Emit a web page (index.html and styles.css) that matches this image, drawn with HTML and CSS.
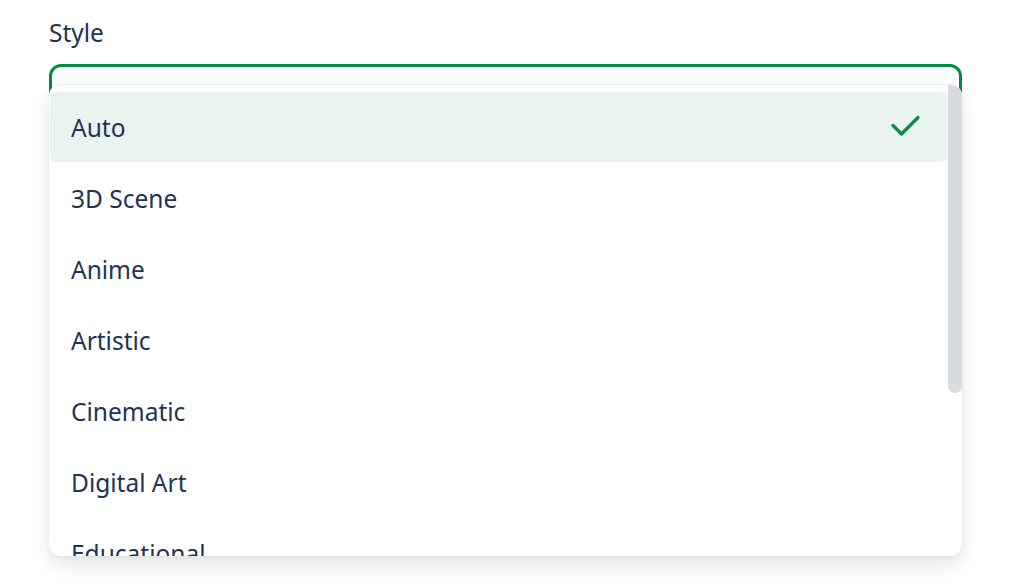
FILE: index.html
```html
<!DOCTYPE html>
<html lang="en">
<head>
<meta charset="utf-8">
<title>Style select</title>
<link rel="stylesheet" href="styles.css">
</head>
<body>
<div class="form">
  <label class="label">Style</label>
  <div class="select-wrap">
    <div class="select"></div>
    <div class="menu">
      <ul class="options">
        <li class="option selected"><span>Auto</span>
          <svg class="check" width="32" height="26" viewBox="0 0 32 26"><path d="M3 10.5 L11.5 19 L28 2.5" fill="none" stroke="#0b8a4b" stroke-width="3.2" stroke-linecap="round" stroke-linejoin="round"/></svg>
        </li>
        <li class="option"><span>3D Scene</span></li>
        <li class="option"><span>Anime</span></li>
        <li class="option"><span>Artistic</span></li>
        <li class="option"><span>Cinematic</span></li>
        <li class="option"><span>Digital Art</span></li>
        <li class="option"><span>Educational</span></li>
      </ul>
      <div class="scrollbar"></div>
    </div>
  </div>
</div>
</body>
</html>
```

FILE: styles.css
```css
html, body {
  margin: 0;
  padding: 0;
  background: #ffffff;
}
body {
  font-family: "Noto Sans", "Open Sans", sans-serif;
  color: #1f3355;
  overflow: hidden;
  height: 582px;
}
.form {
  padding: 16px 0 0 49px;
  width: 913px;
}
.label {
  display: block;
  font-size: 24.5px;
  line-height: 34px;
  color: #1f3355;
}
.select-wrap {
  position: relative;
  margin-top: 14px;
}
.select {
  height: 56px;
  border: 3px solid #078a45;
  border-radius: 12px;
  box-sizing: border-box;
}
.menu {
  position: absolute;
  top: 20px;
  left: 0;
  width: 913px;
  height: 472px;
  background: #ffffff;
  border-top: 1px solid #eceef0;
  border-radius: 12px;
  box-sizing: border-box;
  overflow: hidden;
  box-shadow: 0 10px 22px rgba(0, 0, 0, 0.09), 0 2px 6px rgba(0, 0, 0, 0.05);
}
.options {
  list-style: none;
  margin: 0;
  padding: 7px 15px 0 1px;
}
.option {
  display: flex;
  align-items: center;
  justify-content: space-between;
  height: 71px;
  padding: 0 25px 0 21px;
  font-size: 24.5px;
  border-radius: 6px;
}
.option.selected {
  background: #eaf4ef;
  height: 70px;
  margin-bottom: 1px;
}
.check {
  display: block;
  margin-top: 2px;
}
.scrollbar {
  position: absolute;
  top: 0;
  right: 0;
  width: 14px;
  height: 308px;
  background: #d8dbe0;
  border-radius: 0 0 7px 7px;
}
```
